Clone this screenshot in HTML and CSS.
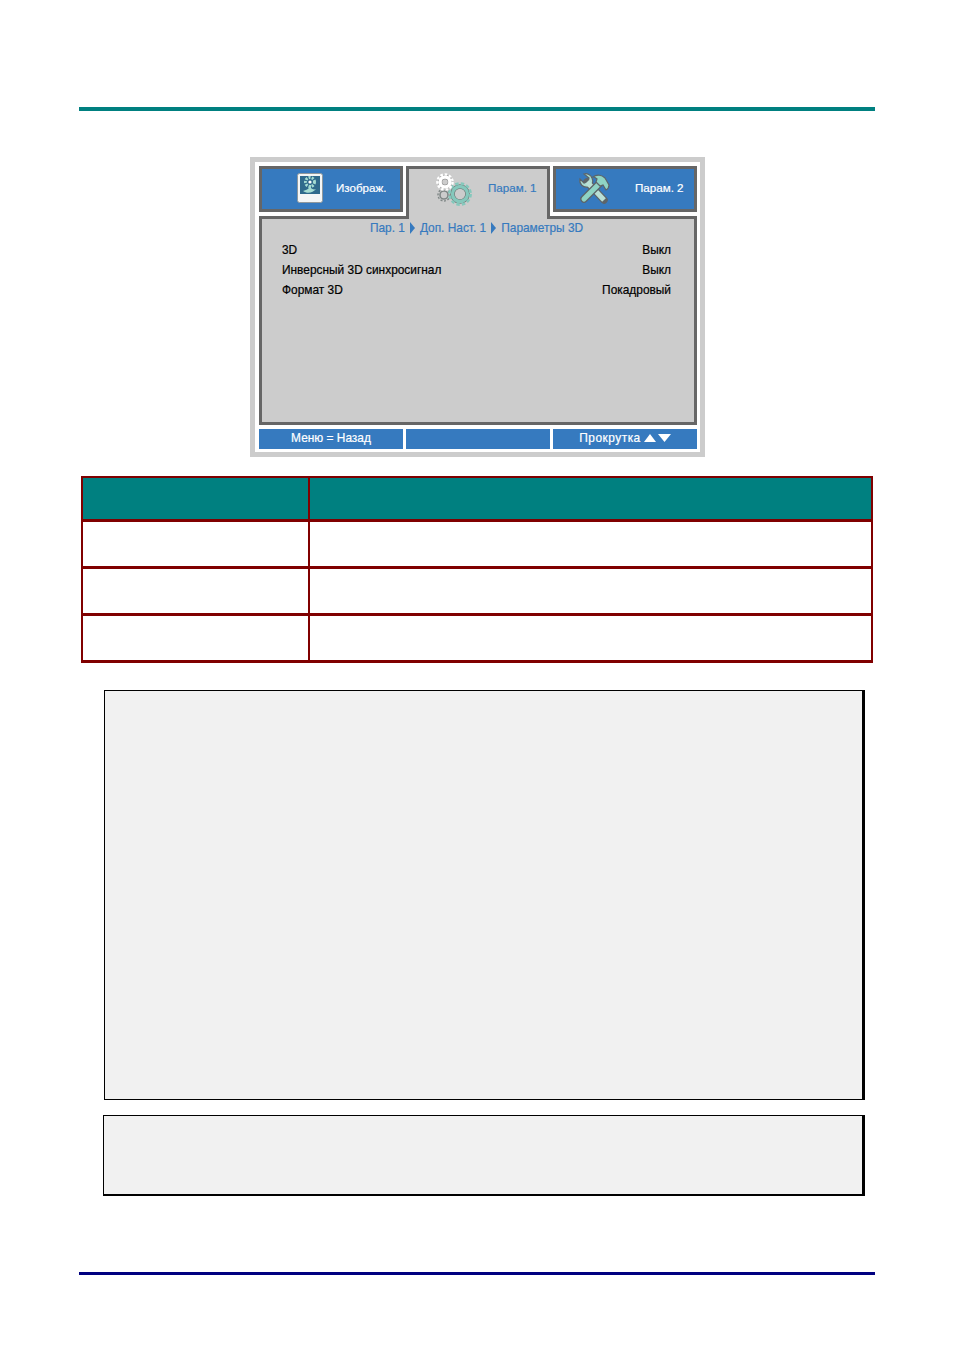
FILE: index.html
```html
<!DOCTYPE html>
<html lang="ru">
<head>
    <meta charset="UTF-8">
    <title>Параметры 3D</title>
    <link rel="stylesheet" href="styles.css">
</head>
<body>
    <div class="page">
        <div class="toprule"></div>

        <div class="osd">
            <div class="tabs">
                <div class="tab">
                    <svg class="tabicon" width="28" height="32" viewBox="0 0 28 32">
                        <rect x="1.500" y="1.500" width="25" height="29" rx="2" fill="#f4f6f6" stroke="#8f989d"/>
                        <rect x="4" y="4" width="20" height="18" fill="#2f6a8c"/>
                        <path d="M7 19c4 3 10 2 13-2-2 1-4 0-5-1v-3h-2v3c-2 2-4 2-6 3z" fill="#a5dcd2"/>
                        <circle cx="14" cy="10" r="4.500" fill="none" stroke="#a5dcd2" stroke-width="3" stroke-dasharray="2 1.200"/>
                        <circle cx="14" cy="10" r="1.600" fill="#fff"/>
                    </svg>
                    <span class="tablabel">Изображ.</span>
                </div>
                <div class="tab active">
                    <svg class="tabicon" width="38" height="34" viewBox="0 0 38 34">
                        <circle cx="9" cy="22" r="4" fill="none" stroke="#7f8786" stroke-width="1.600"/>
                        <circle cx="9" cy="22" r="6" fill="none" stroke="#7f8786" stroke-width="1.400" stroke-dasharray="2 1.600"/>
                        <circle cx="25" cy="21" r="7.500" fill="none" stroke="#6f6f6f" stroke-width="4.600"/>
                        <circle cx="25" cy="21" r="7.500" fill="none" stroke="#85c8bc" stroke-width="3.400"/>
                        <circle cx="25" cy="21" r="10.600" fill="none" stroke="#85c8bc" stroke-width="2.600" stroke-dasharray="3.400 2.200"/>
                        <circle cx="10" cy="9" r="5" fill="none" stroke="#7f7f7f" stroke-width="4.400"/>
                        <circle cx="10" cy="9" r="5" fill="none" stroke="#fff" stroke-width="3.600"/>
                        <circle cx="10" cy="9" r="7.600" fill="none" stroke="#fff" stroke-width="2.400" stroke-dasharray="2.600 1.800"/>
                    </svg>
                    <span class="tablabel">Парам. 1</span>
                </div>
                <div class="tab">
                    <svg class="tabicon" width="32" height="32" viewBox="0 0 32 32">
                        <path d="M9 10 26 28" stroke="#5d6468" stroke-width="7.500" stroke-linecap="round"/>
                        <path d="M2 7c-1 5 3 9 8 8 4-1 6-5 4-9-1-3-5-5-8-4l5 4-1 4-4 1z" fill="#a9dcd0" stroke="#5d6468" stroke-width="1.200"/>
                        <path d="M9 10 26 28" stroke="#b9e0d6" stroke-width="5"/>
                        <path d="M6 27 23 10" stroke="#5d6468" stroke-width="7.500" stroke-linecap="round"/>
                        <path d="M6 27 23 10" stroke="#8fd4c4" stroke-width="5" stroke-linecap="round"/>
                        <path d="M15 5c4-3 9-2 12 1l4 7c0 2-1 4-3 5l-3-5-3 1-4-4 1-3c-1-1-3-2-4-2z" fill="#8fd4c4" stroke="#5d6468" stroke-width="1.200"/>
                    </svg>
                    <span class="tablabel">Парам. 2</span>
                </div>
            </div>

            <div class="panel">
                <div class="crumbs">
                    <span>Пар. 1</span>
                    <svg class="crumbarrow" width="5" height="12" viewBox="0 0 6 12" preserveAspectRatio="none"><path d="M0 0l6 6-6 6z"/></svg>
                    <span>Доп. Наст. 1</span>
                    <svg class="crumbarrow" width="5" height="12" viewBox="0 0 6 12" preserveAspectRatio="none"><path d="M0 0l6 6-6 6z"/></svg>
                    <span>Параметры 3D</span>
                </div>
                <div class="row"><span>3D</span><span>Выкл</span></div>
                <div class="row"><span>Инверсный 3D синхросигнал</span><span>Выкл</span></div>
                <div class="row"><span>Формат 3D</span><span>Покадровый</span></div>
            </div>

            <div class="bottombar">
                <div class="barcell">Меню = Назад</div>
                <div class="barcell"></div>
                <div class="barcell">
                    <span class="scrolltext">Прокрутка</span>
                    <svg width="27" height="8" viewBox="0 0 27 8"><path d="M0 8l6-8 6 8z M14 0h13l-6.500 8z" fill="#fff"/></svg>
                </div>
            </div>
        </div>

        <table class="options">
            <tr class="head"><th class="col1"></th><th></th></tr>
            <tr><td></td><td></td></tr>
            <tr><td></td><td></td></tr>
            <tr><td></td><td></td></tr>
        </table>

        <div class="notebox first"></div>
        <div class="notebox second"></div>

        <div class="bottomrule"></div>
    </div>
</body>
</html>
```

FILE: styles.css
```css
body {
    margin: 0;
    background-color: white;
    font-family: "Liberation Sans", Arial, sans-serif;
}
.page {
    padding: 107px 79px 0;
    height: 1243px;
}
.toprule {
    height: 4px;
    background-color: #008080;
}
.bottomrule {
    height: 3px;
    margin-top: 76px;
    background-color: #000080;
}

/* projector menu */
.osd {
    box-sizing: border-box;
    width: 455px;
    margin: 46px 0 0 171px;
    padding: 4px 3px 3px 4px;
    border: 5px solid #cccccc;
    background-color: white;
    font-size: 11.9px;
    -webkit-text-stroke: 0.2px;
}
.tabs {
    display: flex;
    gap: 3px;
    align-items: flex-start;
}
.tab {
    display: flex;
    align-items: center;
    box-sizing: border-box;
    width: 144px;
    height: 46px;
    padding: 0 0 2px 34px;
    border: 3px solid #666666;
    background-color: #367abf;
    color: white;
    font-size: 11.6px;
}
.tabicon {
    flex: none;
}
.tablabel {
    margin: 0 0 2px 12px;
}
.tab.active {
    position: relative;
    z-index: 1;
    height: 53px;
    margin-bottom: -3px;
    padding: 0 0 9px 26px;
    border-bottom: none;
    background-color: #cccccc;
    color: #367abf;
}
.tab.active .tablabel {
    margin: 0 0 5px 15px;
}
.tab:last-child {
    padding-left: 22px;
}
.tab:last-child .tablabel {
    margin-left: 25px;
}
.panel {
    box-sizing: border-box;
    height: 209px;
    padding: 0 23px 0 20px;
    border: 3px solid #666666;
    background-color: #cccccc;
    color: black;
}
.crumbs {
    display: flex;
    justify-content: center;
    align-items: center;
    gap: 5px;
    height: 18px;
    margin-bottom: 3px;
    color: #367abf;
}
.crumbarrow {
    fill: #367abf;
}
.row {
    display: flex;
    justify-content: space-between;
    align-items: center;
    height: 20px;
}
.bottombar {
    display: flex;
    gap: 3px;
    margin-top: 4px;
}
.barcell {
    display: flex;
    justify-content: center;
    align-items: center;
    gap: 3px;
    box-sizing: border-box;
    width: 144px;
    height: 20px;
    padding-bottom: 2px;
    background-color: #367abf;
    color: white;
}
.scrolltext {
    letter-spacing: 0.5px;
}

/* empty table */
.options {
    width: 792px;
    margin: 19px 0 0 2px;
    border-collapse: collapse;
    table-layout: fixed;
}
.options tr {
    height: 47px;
}
.options td,
.options th {
    padding: 0;
    border: 2px solid #800000;
    border-bottom-width: 3px;
}
.options .head {
    height: 43px;
    background-color: #008080;
}
.col1 {
    width: 225px;
}

/* note boxes */
.notebox {
    box-sizing: border-box;
    background-color: #f1f1f1;
    border: 1px solid black;
    border-right-width: 3px;
}
.first {
    width: 761px;
    height: 410px;
    margin: 27px 0 0 25px;
}
.second {
    width: 762px;
    height: 81px;
    margin: 15px 0 0 24px;
    border-bottom-width: 2px;
}
```
